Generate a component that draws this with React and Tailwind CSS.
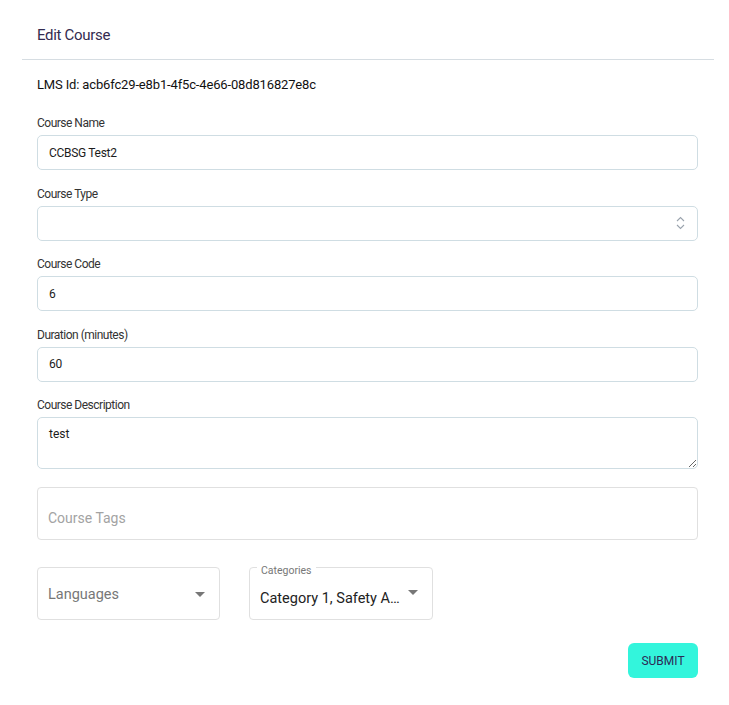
import React from "react";

const inputCls =
  "w-full h-[35px] rounded-[5px] border border-[#cfdde3] bg-white px-[11px] text-[12px] tracking-[-0.3px] text-[#1c1c1c] outline-none";

const Field = ({ label, children }) => (
  <div className="flex flex-col">
    <label className="text-[12px] leading-[16px] tracking-[-0.5px] text-[#333] mb-[4px]">{label}</label>
    {children}
  </div>
);

const ArrowDrop = () => (
  <svg width="10" height="5" viewBox="0 0 10 5" className="shrink-0">
    <path d="M0 0 L5 5 L10 0 Z" fill="#777" />
  </svg>
);

export default function App() {
  return (
    <div className="min-h-[705px] bg-white" style={{ fontFamily: "Roboto, 'Liberation Sans', sans-serif" }}>
      <div className="ml-[22px] w-[692px]">
        <div className="h-[60px] border-b border-[#d6dde2] pt-[24px] pl-[15px]">
          <h1 className="text-[15px] leading-[22px] tracking-[-0.3px] text-[#332b50]">Edit Course</h1>
        </div>

        <div className="pl-[15px] pr-[16px]">
          <p className="mt-[15px] text-[13px] leading-[20px] tracking-[-0.15px] text-[#111]">
            LMS Id: acb6fc29-e8b1-4f5c-4e66-08d816827e8c
          </p>

          <div className="mt-[20px] flex flex-col gap-[15.5px]">
            <Field label="Course Name">
              <input className={inputCls} defaultValue="CCBSG Test2" readOnly />
            </Field>
            <Field label="Course Type">
              <div className={inputCls + " flex items-center justify-end pr-[12px]"}>
                <svg width="9" height="14" viewBox="0 0 9 14">
                  <path d="M1 5 L4.5 1.5 L8 5" fill="none" stroke="#9aa3ad" strokeWidth="1.1" />
                  <path d="M1 9 L4.5 12.5 L8 9" fill="none" stroke="#9aa3ad" strokeWidth="1.1" />
                </svg>
              </div>
            </Field>
            <Field label="Course Code">
              <input className={inputCls} defaultValue="6" readOnly />
            </Field>
            <Field label="Duration (minutes)">
              <input className={inputCls} defaultValue="60" readOnly />
            </Field>
            <Field label="Course Description">
              <textarea
                className="w-full h-[52px] rounded-[5px] border border-[#cfdde3] bg-white px-[11px] pt-[8px] text-[12px] leading-[16px] text-[#1c1c1c] outline-none"
                defaultValue="test"
                readOnly
              />
            </Field>
          </div>

          <div className="mt-[18px] h-[53px] rounded-[4px] border border-[#e0e0e0] flex items-center pl-[10px] pt-[9px]">
            <span className="text-[14px] text-[#a3a3a3]">Course Tags</span>
          </div>

          <div className="mt-[27px] flex gap-[29px]">
            <div className="w-[183px] h-[53px] rounded-[4px] border border-[#e0e0e0] flex items-center justify-between pl-[10px] pr-[14px] pt-[2px]">
              <span className="text-[14.5px] text-[#777]">Languages</span>
              <ArrowDrop />
            </div>
            <div className="relative w-[184px] h-[53px] rounded-[4px] border border-[#e0e0e0] flex items-center justify-between pl-[10px] pr-[14px] pt-[10px]">
              <span className="absolute -top-[3px] left-[7px] bg-white px-[4px] text-[10.5px] leading-[11px] text-[#777]">
                Categories
              </span>
              <span className="text-[14.5px] text-[#222] whitespace-nowrap">Category 1, Safety A…</span>
              <div className="-mt-[12px]">
                <ArrowDrop />
              </div>
            </div>
          </div>

          <div className="mt-[23px] flex justify-end">
            <button className="w-[70px] h-[35px] rounded-[6px] bg-[#33f5dc] text-[12px] text-[#2d2a55]">
              SUBMIT
            </button>
          </div>
        </div>
      </div>
    </div>
  );
}
